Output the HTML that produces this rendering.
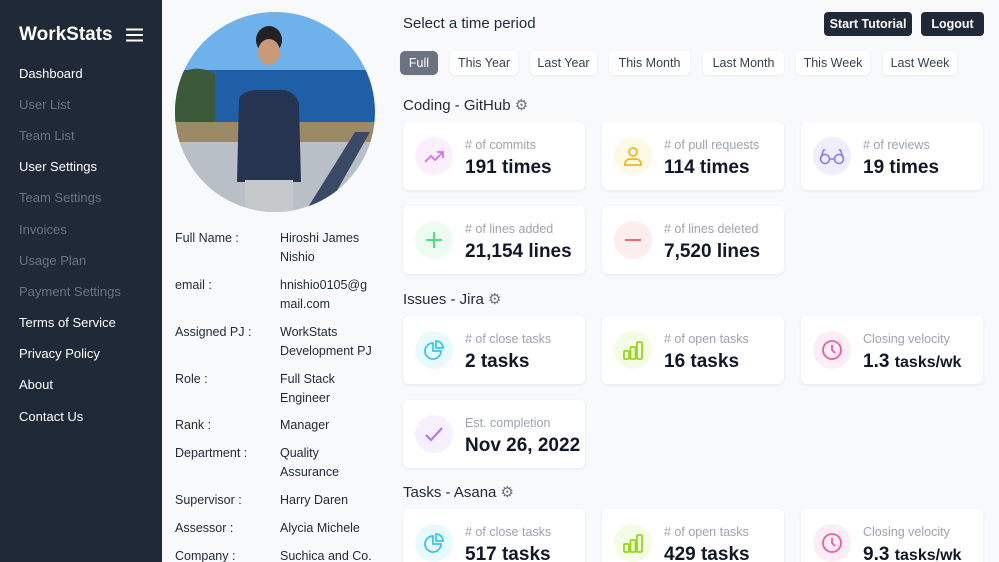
<!DOCTYPE html>
<html style="width:999px;height:562px;overflow:hidden"><head><meta charset="utf-8"><style>
*{margin:0;padding:0;box-sizing:border-box}
body{width:999px;height:562px;overflow:hidden;background:#f8f9fb;font-family:"Liberation Sans",sans-serif;position:relative}
.sb{position:absolute;left:0;top:0;width:162px;height:562px;background:#1f2937}
.logo{position:absolute;left:19px;top:24px;color:#fff;font-size:19px;font-weight:bold}
.nav{position:absolute;left:19px;font-size:13px}
.w{color:#fff}.g{color:#6b7280}
.lbl,.val{position:absolute;font-size:12.5px;color:#1f2937;line-height:19px}
.card{position:absolute;width:182px;height:68px;background:#fff;border-radius:6px;box-shadow:0 1px 3px rgba(0,0,0,.08)}
.ic{position:absolute;left:12px;top:15px;width:38px;height:38px;border-radius:50%;display:flex;align-items:center;justify-content:center}
.cl{position:absolute;left:62px;top:16px;font-size:12.5px;color:#9ca3af}
.cv{position:absolute;left:62px;top:35px;font-size:19px;font-weight:bold;color:#111827}
.cv small{font-size:16px}
.h{position:absolute;left:403px;font-size:15px;color:#1f2937}
.pill{position:absolute;top:51px;height:24px;background:#fff;border-radius:5px;font-size:12.5px;color:#374151;line-height:24px;text-align:center;box-shadow:0 1px 2px rgba(0,0,0,.06)}
.btn{position:absolute;top:12px;height:24px;background:#1f2937;color:#fff;border-radius:4px;font-size:12.5px;font-weight:bold;line-height:24px;text-align:center}
</style></head><body>
<div class="sb">
<div class="logo">WorkStats</div>
<svg style="position:absolute;left:126px;top:28px" width="17" height="14"><path d="M0 1.5h17M0 7h17M0 12.5h17" stroke="#fff" stroke-width="2"/></svg>
<div class="nav w" style="top:66px">Dashboard</div>
<div class="nav g" style="top:97px">User List</div>
<div class="nav g" style="top:128px">Team List</div>
<div class="nav w" style="top:159px">User Settings</div>
<div class="nav g" style="top:190px">Team Settings</div>
<div class="nav g" style="top:222px">Invoices</div>
<div class="nav g" style="top:253px">Usage Plan</div>
<div class="nav g" style="top:284px">Payment Settings</div>
<div class="nav w" style="top:315px">Terms of Service</div>
<div class="nav w" style="top:346px">Privacy Policy</div>
<div class="nav w" style="top:377px">About</div>
<div class="nav w" style="top:409px">Contact Us</div>
</div>
<svg style="position:absolute;left:175px;top:12px" width="200" height="200">
<defs><clipPath id="c"><circle cx="100" cy="100" r="100"/></clipPath></defs>
<g clip-path="url(#c)">
<rect width="200" height="60" fill="#6fb1ea"/>
<rect y="58" width="200" height="55" fill="#1f5fa8"/>
<path d="M0 65 Q20 50 40 62 L40 110 L0 110Z" fill="#3c5a3a"/>
<rect y="110" width="200" height="25" fill="#9a8a66"/>
<rect y="130" width="200" height="70" fill="#b9bfc6"/>
<path d="M130 200 L180 120 L195 120 L150 200Z" fill="#3a4a66"/>
<ellipse cx="94" cy="28" rx="13" ry="14" fill="#222"/>
<ellipse cx="94" cy="40" rx="11" ry="13" fill="#c89a78"/>
<path d="M64 88 Q65 80 80 78 L110 78 Q122 82 124 92 L126 170 L62 170Z" fill="#27344f"/>
<rect x="70" y="168" width="48" height="32" fill="#c6c9cc"/>
</g></svg>
<div class="lbl" style="left:175px;top:229px">Full Name :</div><div class="val" style="left:280px;top:229px">Hiroshi James<br>Nishio</div>
<div class="lbl" style="left:175px;top:276px">email :</div><div class="val" style="left:280px;top:276px">hnishio0105@g<br>mail.com</div>
<div class="lbl" style="left:175px;top:323px">Assigned PJ :</div><div class="val" style="left:280px;top:323px">WorkStats<br>Development PJ</div>
<div class="lbl" style="left:175px;top:370px">Role :</div><div class="val" style="left:280px;top:370px">Full Stack<br>Engineer</div>
<div class="lbl" style="left:175px;top:416px">Rank :</div><div class="val" style="left:280px;top:416px">Manager</div>
<div class="lbl" style="left:175px;top:444px">Department :</div><div class="val" style="left:280px;top:444px">Quality<br>Assurance</div>
<div class="lbl" style="left:175px;top:491px">Supervisor :</div><div class="val" style="left:280px;top:491px">Harry Daren</div>
<div class="lbl" style="left:175px;top:519px">Assessor :</div><div class="val" style="left:280px;top:519px">Alycia Michele</div>
<div class="lbl" style="left:175px;top:547px">Company :</div><div class="val" style="left:280px;top:547px">Suchica and Co.</div>

<div class="h" style="top:15px">Select a time period</div>
<div class="btn" style="left:824px;width:88px">Start Tutorial</div>
<div class="btn" style="left:921px;width:63px">Logout</div>
<div class="pill" style="left:400px;width:38px;background:#6b7280;color:#fff">Full</div>
<div class="pill" style="left:450px;width:68px">This Year</div>
<div class="pill" style="left:530px;width:67px">Last Year</div>
<div class="pill" style="left:609px;width:81px">This Month</div>
<div class="pill" style="left:703px;width:81px">Last Month</div>
<div class="pill" style="left:796px;width:74px">This Week</div>
<div class="pill" style="left:883px;width:74px">Last Week</div>

<div class="h" style="top:96px">Coding - GitHub <span style="color:#6b7280">⚙</span></div>
<div class="h" style="top:290px">Issues - Jira <span style="color:#6b7280">⚙</span></div>
<div class="h" style="top:483px">Tasks - Asana <span style="color:#6b7280">⚙</span></div>

<div class="card" style="left:403px;top:122px"><div class="ic" style="background:#fbeefe"><svg width="22" height="22" fill="none" stroke="#d96ef0" stroke-width="1.8"><path d="M2 17l6-6 4 4 8-8M14 7h6v6"/></svg></div><div class="cl"># of commits</div><div class="cv">191 times</div></div>
<div class="card" style="left:602px;top:122px"><div class="ic" style="background:#fef9e6"><svg width="22" height="22" fill="none" stroke="#f2b619" stroke-width="1.8"><circle cx="11" cy="7" r="4"/><path d="M3 20v-1a5 5 0 0 1 5-5h6a5 5 0 0 1 5 5v1z"/></svg></div><div class="cl"># of pull requests</div><div class="cv">114 times</div></div>
<div class="card" style="left:801px;top:122px"><div class="ic" style="background:#f0edfd"><svg width="26" height="22" fill="none" stroke="#8b7cf0" stroke-width="1.6"><circle cx="6" cy="14" r="4.5"/><circle cx="20" cy="14" r="4.5"/><path d="M10.5 14h5M1.5 14l3-9h2M24.5 14l-3-9h-2"/></svg></div><div class="cl"># of reviews</div><div class="cv">19 times</div></div>
<div class="card" style="left:403px;top:206px"><div class="ic" style="background:#edfbf0"><svg width="22" height="22" stroke="#4ade80" stroke-width="2"><path d="M11 3v16M3 11h16"/></svg></div><div class="cl"># of lines added</div><div class="cv">21,154 lines</div></div>
<div class="card" style="left:602px;top:206px"><div class="ic" style="background:#fdeeee"><svg width="22" height="22" stroke="#f06a6a" stroke-width="2"><path d="M3 11h16"/></svg></div><div class="cl"># of lines deleted</div><div class="cv">7,520 lines</div></div>

<div class="card" style="left:403px;top:316px"><div class="ic" style="background:#e9fafe"><svg width="22" height="22" fill="none" stroke="#38c5ee" stroke-width="1.8"><path d="M10 4a8 8 0 1 0 8 8h-8z"/><path d="M13 2v7h7a7 7 0 0 0-7-7z"/></svg></div><div class="cl"># of close tasks</div><div class="cv">2 tasks</div></div>
<div class="card" style="left:602px;top:316px"><div class="ic" style="background:#f4fde4"><svg width="22" height="22" fill="none" stroke="#96d61a" stroke-width="1.8"><rect x="2" y="12" width="5" height="8" rx="1"/><rect x="8.5" y="8" width="5" height="12" rx="1"/><rect x="15" y="3" width="5" height="17" rx="1"/></svg></div><div class="cl"># of open tasks</div><div class="cv">16 tasks</div></div>
<div class="card" style="left:801px;top:316px"><div class="ic" style="background:#fdedf5"><svg width="22" height="22" fill="none" stroke="#ec5da5" stroke-width="1.8"><circle cx="11" cy="11" r="9"/><path d="M11 6v5l3 3"/></svg></div><div class="cl">Closing velocity</div><div class="cv">1.3 <small>tasks/wk</small></div></div>
<div class="card" style="left:403px;top:400px"><div class="ic" style="background:#f5effe"><svg width="22" height="22" fill="none" stroke="#b57af0" stroke-width="2.2"><path d="M3 12l5 5L19 5"/></svg></div><div class="cl">Est. completion</div><div class="cv">Nov 26, 2022</div></div>

<div class="card" style="left:403px;top:509px"><div class="ic" style="background:#e9fafe"><svg width="22" height="22" fill="none" stroke="#38c5ee" stroke-width="1.8"><path d="M10 4a8 8 0 1 0 8 8h-8z"/><path d="M13 2v7h7a7 7 0 0 0-7-7z"/></svg></div><div class="cl"># of close tasks</div><div class="cv">517 tasks</div></div>
<div class="card" style="left:602px;top:509px"><div class="ic" style="background:#f4fde4"><svg width="22" height="22" fill="none" stroke="#96d61a" stroke-width="1.8"><rect x="2" y="12" width="5" height="8" rx="1"/><rect x="8.5" y="8" width="5" height="12" rx="1"/><rect x="15" y="3" width="5" height="17" rx="1"/></svg></div><div class="cl"># of open tasks</div><div class="cv">429 tasks</div></div>
<div class="card" style="left:801px;top:509px"><div class="ic" style="background:#fdedf5"><svg width="22" height="22" fill="none" stroke="#ec5da5" stroke-width="1.8"><circle cx="11" cy="11" r="9"/><path d="M11 6v5l3 3"/></svg></div><div class="cl">Closing velocity</div><div class="cv">9.3 <small>tasks/wk</small></div></div>
</body></html>
